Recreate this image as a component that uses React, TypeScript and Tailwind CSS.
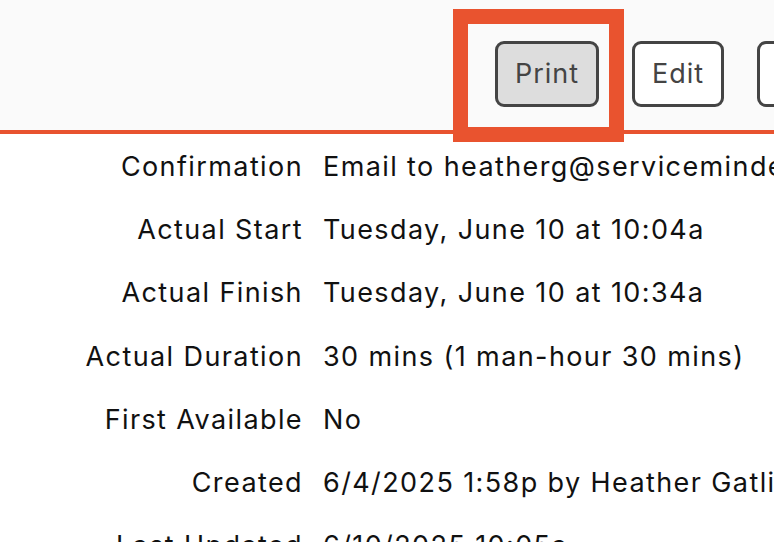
const ROWS = [
  { label: "Confirmation", value: "Email to heatherg@serviceminder.io" },
  { label: "Actual Start", value: "Tuesday, June 10 at 10:04a" },
  { label: "Actual Finish", value: "Tuesday, June 10 at 10:34a" },
  { label: "Actual Duration", value: "30 mins (1 man-hour 30 mins)" },
  { label: "First Available", value: "No" },
  { label: "Created", value: "6/4/2025 1:58p by Heather Gatlin" },
  { label: "Last Updated", value: "6/10/2025 10:05a" },
];

export default function App() {
  return (
    <div
      className="relative h-[542px] w-[774px] overflow-hidden bg-white text-[#111]"
      style={{ fontFamily: "Inter, 'Liberation Sans', sans-serif" }}
    >
      {/* Toolbar */}
      <div className="flex h-[134px] items-start gap-[33px] whitespace-nowrap border-b-4 border-[#e8532f] bg-[#fafafa] pl-[495px] pt-[41px] tracking-[1px]">
        <button className="flex h-[66px] w-[104px] shrink-0 items-center justify-center rounded-[9px] border-[3px] border-[#444] bg-[#dddddd] text-[27px] text-[#444]">
          Print
        </button>
        <button className="flex h-[66px] w-[92px] shrink-0 items-center justify-center rounded-[9px] border-[3px] border-[#444] bg-white text-[27px] text-[#444]">
          Edit
        </button>
        <button className="flex h-[66px] w-[110px] shrink-0 items-center justify-center rounded-[9px] border-[3px] border-[#444] bg-white text-[27px] text-[#444]">
          More
        </button>
      </div>

      {/* Highlight annotation */}
      <div className="pointer-events-none absolute left-[453px] top-[9px] h-[133px] w-[171px] border-[15px] border-[#e9532f]" />

      {/* Details */}
      <div className="grid grid-cols-[303px_1fr] gap-x-[20px] whitespace-nowrap pt-px text-[27px] leading-[63.2px] tracking-[1.4px]">
        {ROWS.map((row) => (
          <div key={row.label} className="contents">
            <span className="text-right">{row.label}</span>
            <span>{row.value}</span>
          </div>
        ))}
      </div>
    </div>
  );
}
